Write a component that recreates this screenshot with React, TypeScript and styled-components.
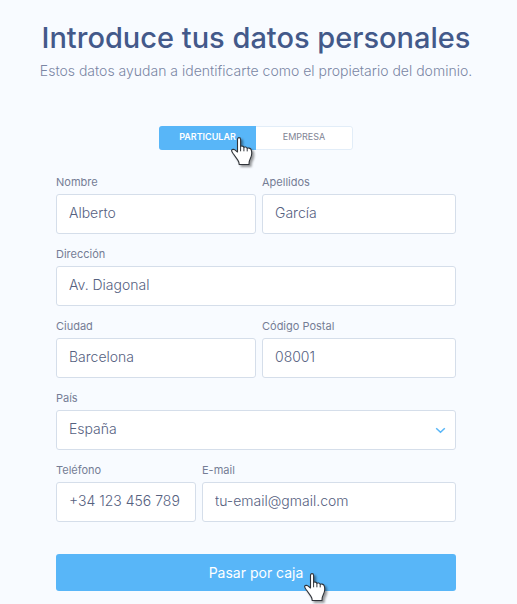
import React, { useId, useState } from "react";
import styled, { createGlobalStyle } from "styled-components";

const GlobalStyle = createGlobalStyle`
  *, *::before, *::after { box-sizing: border-box; }
  body {
    margin: 0;
    background: #f8fbff;
    font-family: Inter, "Liberation Sans", sans-serif;
    color: #5f6b8a;
  }
`;

const Page = styled.main`
  display: flex;
  flex-direction: column;
  align-items: center;
  padding: 20px 30px 13px 25px;
`;

const Title = styled.h1`
  margin: 0;
  font-size: 29px;
  line-height: 36px;
  font-weight: 500;
  color: #43598a;
  text-align: center;
  white-space: nowrap;
`;

const Subtitle = styled.p`
  margin: 5px 0 0;
  font-size: 14px;
  line-height: 20px;
  font-weight: 300;
  color: #7a86a4;
  text-align: center;
  white-space: nowrap;
`;

const Toggle = styled.div`
  display: grid;
  grid-template-columns: 1fr 1fr;
  width: 194px;
  height: 24px;
  margin-top: 45px;
  border: 1px solid #e2edf8;
  border-radius: 3px;
  background: #fff;
`;

const ToggleOption = styled.button<{ $active: boolean }>`
  position: relative;
  margin: ${(p) => (p.$active ? "-1px 0 -1px -1px" : "0")};
  padding: 0 0 2px;
  border: 0;
  border-radius: ${(p) => (p.$active ? "3px 0 0 3px" : "0 3px 3px 0")};
  background: ${(p) => (p.$active ? "#58b6f8" : "#fff")};
  color: ${(p) => (p.$active ? "#fff" : "#7f8494")};
  font-family: inherit;
  font-size: 9px;
  line-height: 12px;
  font-weight: ${(p) => (p.$active ? 600 : 400)};
  cursor: pointer;
`;

const Form = styled.form`
  display: flex;
  flex-direction: column;
  gap: 12px;
  width: 100%;
  max-width: 400px;
  margin-top: 24px;
`;

const Row = styled.div<{ $columns: string }>`
  display: grid;
  grid-template-columns: ${(p) => p.$columns};
  gap: 6px;
`;

const FieldBox = styled.div`
  display: flex;
  flex-direction: column;
  gap: 4px;
  min-width: 0;
`;

const Label = styled.label`
  font-size: 11px;
  line-height: 16px;
  color: #757d95;
`;

const Input = styled.input`
  width: 100%;
  height: 40px;
  padding: 0 12px 3px;
  border: 1px solid #d5deea;
  border-radius: 3px;
  background: #fff;
  color: #56617f;
  font-family: inherit;
  font-size: 14px;
  font-weight: 300;
  outline: none;
`;

const SelectWrap = styled.div`
  position: relative;
`;

const Select = styled(Input).attrs({ as: "select" })`
  display: block;
  appearance: none;
`;

const Chevron = styled.svg`
  position: absolute;
  right: 10px;
  top: 17px;
  pointer-events: none;
`;

const Submit = styled.button`
  position: relative;
  height: 37px;
  margin-top: 20px;
  padding: 0;
  border: 0;
  border-radius: 3px;
  background: #58b6f8;
  color: #fff;
  font-family: inherit;
  font-size: 14px;
  font-weight: 400;
  cursor: pointer;
`;

const Pointer = styled.svg`
  position: absolute;
  z-index: 1;
  pointer-events: none;
  filter: drop-shadow(2px 2px 1px rgba(0, 0, 0, 0.4));
`;

const TogglePointer = styled(Pointer)`
  left: 72px;
  top: 11px;
`;

const SubmitPointer = styled(Pointer)`
  left: calc(50% + 48px);
  top: 19px;
`;

const handShape = (
  <>
    <path
      d="M6.5 2.4C6.5 1.2 7.1.6 8 .6s1.6.6 1.6 1.8v7.2c.3-.7 3-.9 3.3.8.5-.8 3.1-.5 3.3 1 .6-.7 3.2-.4 3.9 1.1.5 1.1.7 2.5.6 4.2-.1 3.1-1.1 4.3-2 6.3-.6 1.2-.7 2.9-.7 4.500H8.200c0-1.800-.4-3-1.400-4.400L2.300 16.800C1.600 15.700.4 14.500.6 13.400c.2-1.200 2.200-1.300 3.300-.5l2.600 2.100z"
      fill="#fff"
      stroke="#30343a"
      strokeLinejoin="round"
      strokeWidth="1.1"
    />
    <path d="M9.6 9.300v5M12.900 10.300v4M16.200 11.400v3" fill="none" stroke="#30343a" />
  </>
);

function Field({ label, value, type = "text" }: { label: string; value: string; type?: string }) {
  const id = useId();
  return (
    <FieldBox>
      <Label htmlFor={id}>{label}</Label>
      <Input id={id} type={type} defaultValue={value} />
    </FieldBox>
  );
}

export default function App() {
  const [kind, setKind] = useState<"particular" | "empresa">("particular");
  return (
    <>
      <GlobalStyle />
      <Page>
        <Title>Introduce tus datos personales</Title>
        <Subtitle>Estos datos ayudan a identificarte como el propietario del dominio.</Subtitle>
        <Toggle role="group" aria-label="Tipo de cliente">
          <ToggleOption
            type="button"
            $active={kind === "particular"}
            aria-pressed={kind === "particular"}
            onClick={() => setKind("particular")}
          >
            PARTICULAR
            <TogglePointer width="22" height="29" viewBox="0 0 22 29" aria-hidden="true">
              {handShape}
            </TogglePointer>
          </ToggleOption>
          <ToggleOption
            type="button"
            $active={kind === "empresa"}
            aria-pressed={kind === "empresa"}
            onClick={() => setKind("empresa")}
          >
            EMPRESA
          </ToggleOption>
        </Toggle>
        <Form onSubmit={(e) => e.preventDefault()}>
          <Row $columns="200fr 194fr">
            <Field label="Nombre" value="Alberto" />
            <Field label="Apellidos" value="García" />
          </Row>
          <Field label="Dirección" value="Av. Diagonal" />
          <Row $columns="200fr 194fr">
            <Field label="Ciudad" value="Barcelona" />
            <Field label="Código Postal" value="08001" />
          </Row>
          <FieldBox>
            <Label htmlFor="pais">País</Label>
            <SelectWrap>
              <Select id="pais" defaultValue="España">
                <option>España</option>
              </Select>
              <Chevron width="11" height="7" viewBox="0 0 11 7" aria-hidden="true">
                <path d="M1.2 1.2l4.300 4.100 4.300-4.100" fill="none" stroke="#58b6f8" strokeWidth="1.5" />
              </Chevron>
            </SelectWrap>
          </FieldBox>
          <Row $columns="140fr 254fr">
            <Field label="Teléfono" value="+34 123 456 789" type="tel" />
            <Field label="E-mail" value="tu-email@gmail.com" type="email" />
          </Row>
          <Submit type="submit">
            Pasar por caja
            <SubmitPointer width="22" height="29" viewBox="0 0 22 29" aria-hidden="true">
              {handShape}
            </SubmitPointer>
          </Submit>
        </Form>
      </Page>
    </>
  );
}
